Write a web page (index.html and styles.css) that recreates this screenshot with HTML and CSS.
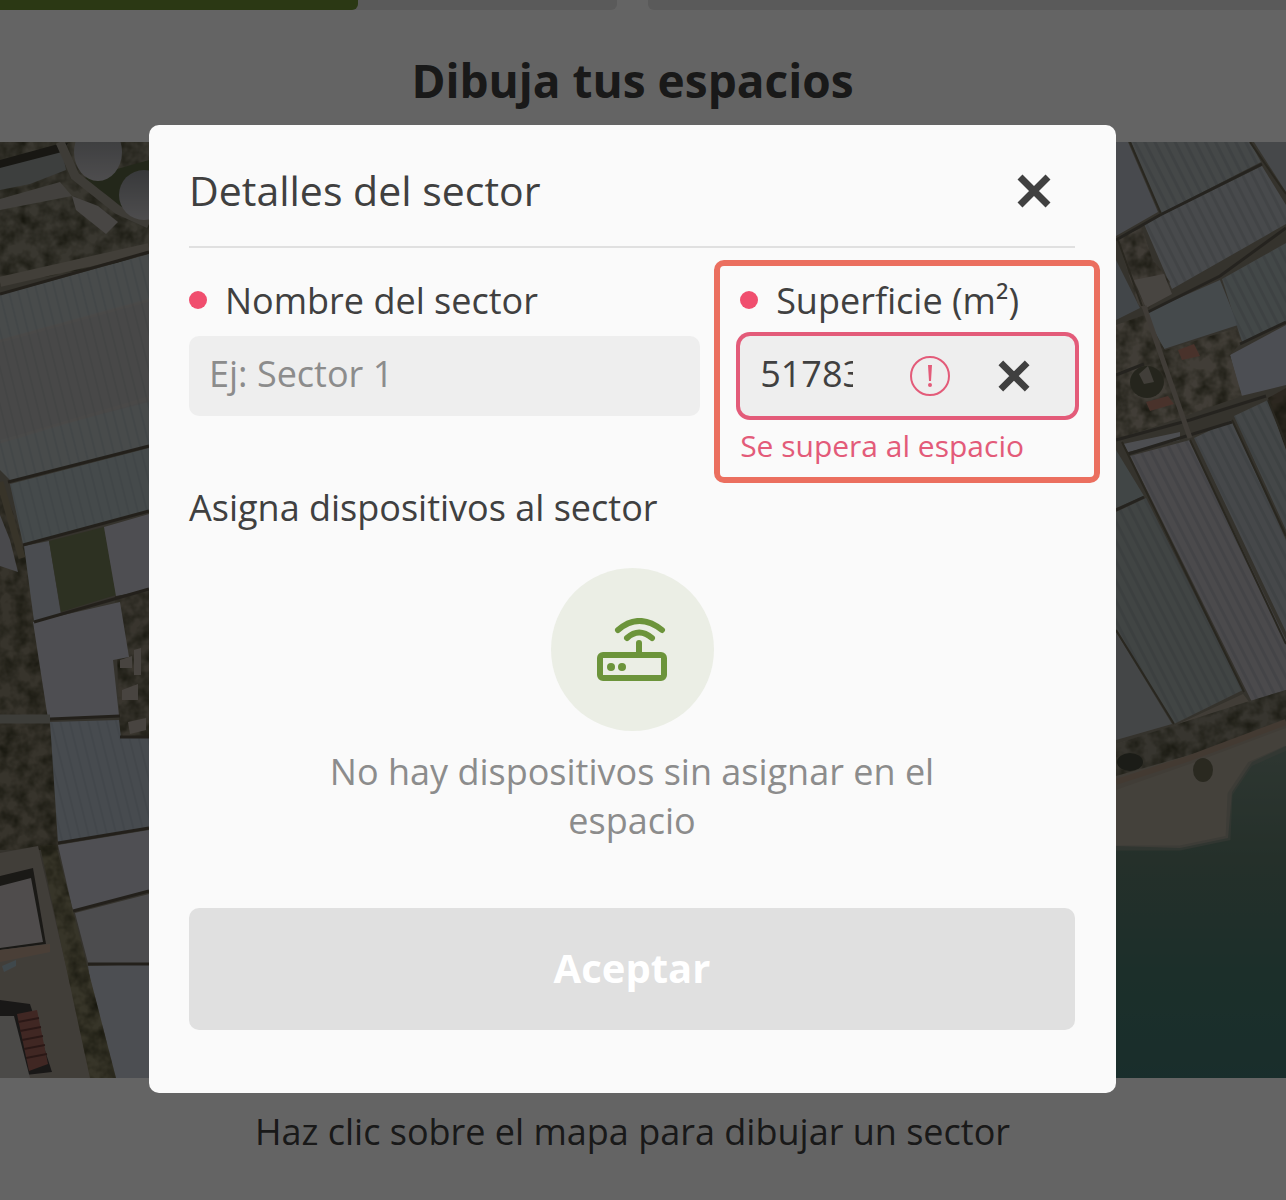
FILE: index.html
```
<!DOCTYPE html>
<html lang="es">
<head>
    <meta charset="UTF-8">
    <meta name="viewport" content="width=device-width, initial-scale=1.0">
    <title>Dibuja tus espacios</title>
    <link rel="stylesheet" href="styles.css">
</head>
<body>

    <!-- Página -->
    <div class="page">
        <div class="progress">
            <div class="step current"><div class="step-fill"></div></div>
            <div class="step"></div>
        </div>

        <h1>Dibuja tus espacios</h1>

        <!-- Mapa -->
        <svg class="map" viewBox="0 142 1286 936" preserveAspectRatio="xMidYMid slice" aria-hidden="true">
            <defs>
                <pattern id="rows" width="9" height="9" patternUnits="userSpaceOnUse" patternTransform="rotate(-14)">
                    <rect width="2" height="9" fill="#6f7f82" opacity="0.15"/>
                </pattern>
                <pattern id="rowsRight" width="9" height="9" patternUnits="userSpaceOnUse" patternTransform="rotate(-27)">
                    <rect width="3" height="9" fill="#5c6b6e" opacity="0.18"/>
                </pattern>
                <linearGradient id="sea" x1="0" y1="0" x2="0" y2="1">
                    <stop offset="0" stop-color="#73897c"/>
                    <stop offset="0.35" stop-color="#5c7869"/>
                    <stop offset="0.7" stop-color="#467669"/>
                    <stop offset="1" stop-color="#40736e"/>
                </linearGradient>
                <linearGradient id="tank" x1="0" y1="0" x2="0" y2="1">
                    <stop offset="0" stop-color="#8c8f93"/>
                    <stop offset="1" stop-color="#c2c0c3"/>
                </linearGradient>
                <filter id="grain" x="0" y="0" width="100%" height="100%" color-interpolation-filters="sRGB">
                    <feTurbulence type="fractalNoise" baseFrequency="0.07" numOctaves="3" seed="4"/>
                    <feColorMatrix values="0 0 0 0 0.2  0 0 0 0 0.2  0 0 0 0 0.12  1.6 0 0 0 -0.55"/>
                    <feComposite in2="SourceGraphic" operator="in" result="n"/>
                    <feMerge><feMergeNode in="SourceGraphic"/><feMergeNode in="n"/></feMerge>
                </filter>
            </defs>

            <!-- Zona oeste -->
            <rect y="142" width="640" height="936" fill="#857f70"/>
            <g filter="url(#grain)">
                <path d="M0 142H149V258L0 285Z" fill="#8f8a78"/>
                <path d="M0 480L24 540L52 740L58 850L0 850Z" fill="#8a826e"/>
                <path d="M115 596L149 586V745H120Z" fill="#8e8674"/>
            </g>
            <path d="M0 164L62 150L66 170L30 184L0 190Z" fill="#989d9c"/>
            <path d="M0 160L62 143H68L62 152L0 168Z" fill="#3c3b30"/>
            <path d="M0 199L60 182L72 196L0 210Z" fill="#a8a49b"/>
            <path d="M85 178L149 160V215L128 212Z" fill="#596342"/>
            <path d="M60 142L75 176L118 210L149 224" fill="none" stroke="#9c978b" stroke-width="9"/>
            <path d="M72 196L98 206L118 222L106 234L76 210Z" fill="#b3aeaa"/>
            <ellipse cx="98" cy="152" rx="24" ry="29" fill="url(#tank)"/>
            <ellipse cx="144" cy="195" rx="25" ry="25" fill="url(#tank)"/>
            <path d="M0 282L149 248" stroke="#a59d8e" stroke-width="10"/>
            <path d="M0 295L149 254V446L12 482L0 470Z" fill="#b3bbbc"/>
            <path d="M0 340L149 300V402L0 440Z" fill="#b5b5b4"/>
            <path d="M0 341L149 300M0 442L149 398" stroke="#c0b9b4" stroke-width="3" opacity="0.5"/>
            <path d="M10 484L149 448V511L23 544Z" fill="#adb9bb"/>
            <path d="M24 546L49 541L61 615L34 621Z" fill="#b8bfc8"/>
            <path d="M49 541L104 527L116 595L61 612Z" fill="#727a55"/>
            <path d="M104 527L149 514V590L116 596Z" fill="#c3c4ce"/>
            <path d="M33 622L120 602L129 657L113 660L119 716L48 719Z" fill="#c4c4cd"/>
            <path d="M50 722L119 720L121 738H149V828L58 842Z" fill="#b1bbc6"/>
            <path d="M58 845L149 830V890L73 911Z" fill="#c5c6d0"/>
            <path d="M75 913L149 894V963L88 963Z" fill="#bebec3"/>
            <path d="M88 966L149 964V1078H114L98 1030Z" fill="#bfc3ce"/>
            <path d="M0 295L149 254V446L12 482L0 470ZM10 484L149 448V511L23 544ZM50 722L119 720L121 738H149V828L58 842Z" fill="url(#rows)"/>
            <path d="M0 294L149 252M8 482L149 446M23 545L149 511M34 622L149 589M50 719L120 716M120 737H149M58 843L149 828M73 911L149 891M88 964H149" fill="none" stroke="#585245" stroke-width="3"/>
            <path d="M0 719L50 719" stroke="#9a9890" stroke-width="9"/>
            <path d="M0 482L22 558" stroke="#8c8268" stroke-width="7"/>
            <path d="M0 515L10 540L18 572L0 566Z" fill="#b6b6bd"/>
            <path d="M120 660L132 656V668H120ZM134 650L141 648V675H134ZM122 690L138 684V700H122ZM128 722L146 718V730L130 734Z" fill="#b5aaa0"/>
            <path d="M0 853L38 846L92 1078H0Z" fill="#a49b90"/>
            <path d="M0 876L33 868L46 944L0 950Z" fill="#423f38"/>
            <path d="M0 886L31 878L43 942L0 948Z" fill="#c5bfbd"/>
            <path d="M0 950L50 944V952L0 962Z" fill="#b99e89"/>
            <path d="M40 846L56 845L116 1078H90Z" fill="#8b8566" filter="url(#grain)"/>
            <path d="M0 1000L30 1004L52 1072L0 1078Z" fill="#3f3c3a"/>
            <path d="M0 1016L14 1016L30 1078H0Z" fill="#bcb8b5"/>
            <path d="M17 1014L37 1010L48 1064L29 1071Z" fill="#a06258"/>
            <path d="M18 1022L39 1018M20 1031L41 1027M22 1040L43 1036M24 1049L45 1045M26 1058L47 1054" stroke="#6a3d38" stroke-width="2"/>
            <path d="M2 966L16 960V966L4 972Z" fill="#9fb4be"/>

            <!-- Zona este -->
            <rect x="640" y="142" width="646" height="936" fill="#857f70"/>
            <path d="M1116 142H1128L1158 212L1116 236Z" fill="#b5b9c2"/>
            <path d="M1131 142H1250L1261 162L1160 214Z" fill="#acb3b5"/>
            <path d="M1144 224L1262 166L1286 205V224L1172 289Z" fill="#b4babe"/>
            <path d="M1254 142H1286V192Z" fill="#aeb4b9"/>
            <path d="M1222 279L1286 243V322L1242 342Z" fill="#a9b3b4"/>
            <path d="M1145 313L1220 280L1238 325L1164 349Z" fill="#adb8bf"/>
            <path d="M1230 355L1286 325V385L1241 396Z" fill="#bfc2cf"/>
            <path d="M1116 260L1140 308L1116 320Z" fill="#a5b0b7"/>
            <g filter="url(#grain)">
                <path d="M1117 238L1142 228L1152 258L1170 282L1146 312L1138 304Z" fill="#a19788"/>
                <path d="M1116 325L1144 315L1165 350L1236 328L1242 342L1230 355L1242 396L1116 440Z" fill="#a39a89"/>
                <path d="M1268 398L1286 388V450Z" fill="#6e6350"/>
            </g>
            <path d="M1134 280L1164 274L1172 294L1146 308Z" fill="#b5aca4"/>
            <ellipse cx="1147" cy="382" rx="17" ry="16" fill="#5d5e4a"/>
            <path d="M1139 374L1148 366L1154 382L1144 384Z" fill="#a29c8e"/>
            <path d="M1178 350L1194 344L1200 356L1182 360ZM1146 402L1168 396L1174 404L1150 411Z" fill="#b77d6d"/>
            <path d="M1123 444L1180 432V440L1128 452Z" fill="#c0c3cb"/>
            <path d="M1116 450L1144 496L1116 508Z" fill="#a3b0b0"/>
            <path d="M1116 512L1146 498L1243 690L1174 724L1116 630Z" fill="#a4acab"/>
            <path d="M1130 456L1190 440L1286 640V690L1254 706Z" fill="#bbb9bf"/>
            <path d="M1194 438L1232 420L1286 540V632Z" fill="#afb5b9"/>
            <path d="M1234 416L1268 400L1286 450V530Z" fill="#aab2b3"/>
            <path d="M1116 632L1172 724L1116 740Z" fill="#abb0b2"/>
            <path d="M1131 142H1250L1261 162L1160 214ZM1144 224L1262 166L1286 205V224L1172 289ZM1222 279L1286 243V322L1242 342ZM1116 512L1146 498L1243 690L1174 724L1116 630ZM1130 456L1190 440L1286 640V690L1254 706ZM1194 438L1232 420L1286 540V632ZM1234 416L1268 400L1286 450V530Z" fill="url(#rowsRight)"/>
            <path d="M1116 240L1160 215L1262 164M1146 313L1220 276L1286 228M1116 375L1144 364M1116 440L1190 420L1266 396M1128 454L1232 422M1240 344L1286 322M1116 510L1144 497" fill="none" stroke="#5c594e" stroke-width="3"/>
            <path d="M1130 142L1161 214M1250 142L1286 194M1118 240L1142 306M1122 442L1244 692M1190 440L1286 644M1232 420L1286 536M1116 630L1174 724M1268 400L1286 444" fill="none" stroke="#676250" stroke-width="2"/>
            <path d="M1144 306L1190 438" fill="none" stroke="#a0978a" stroke-width="5"/>

            <!-- Costa -->
            <path d="M640 760L1116 744L1174 726L1243 694L1254 708L1286 690V1078H640Z" fill="#a39a8a"/>
            <g filter="url(#grain)">
                <path d="M1116 744L1240 704L1286 690V724L1200 752L1116 776Z" fill="#8a8575"/>
            </g>
            <path d="M1116 790L1190 764L1286 728V760L1230 850H1116Z" fill="#aba394"/>
            <path d="M1116 782L1190 758L1286 722" fill="none" stroke="#a8917e" stroke-width="6"/>
            <ellipse cx="1130" cy="762" rx="13" ry="9" fill="#45483a"/>
            <ellipse cx="1203" cy="770" rx="10" ry="12" fill="#696752"/>
            <path d="M640 846H1116L1180 848L1228 838L1232 792L1252 762L1286 746V1078H640Z" fill="url(#sea)"/>
            <path d="M1116 848L1180 848L1228 838L1230 794L1250 764L1286 748" fill="none" stroke="#8c8f83" stroke-width="5" opacity="0.6"/>
        </svg>

        <p class="hint">Haz clic sobre el mapa para dibujar un sector</p>
    </div>

    <!-- Modal con los detalles del sector -->
    <div class="overlay">
        <form class="modal" role="dialog" aria-labelledby="modalTitle">
            <div class="modal-header">
                <h2 id="modalTitle">Detalles del sector</h2>
                <button type="button" class="close" aria-label="Cerrar">
                    <svg class="icon-x" viewBox="0 0 34 34"><path d="M3 3L31 31M31 3L3 31"/></svg>
                </button>
            </div>

            <div class="fields">
                <div class="field">
                    <label for="nombre">Nombre del sector</label>
                    <div class="control">
                        <input type="text" id="nombre" placeholder="Ej: Sector 1">
                    </div>
                </div>
                <div class="field highlight">
                    <label for="superficie">Superficie (m²)</label>
                    <div class="control invalid">
                        <input type="text" id="superficie" value="51783" aria-describedby="superficieError">
                        <svg class="icon-alert" viewBox="0 0 40 40" aria-hidden="true">
                            <circle cx="20" cy="20" r="19"/>
                            <path d="M18 9H22L21 25H19Z"/>
                            <circle class="point" cx="20" cy="29" r="2"/>
                        </svg>
                        <button type="button" class="clear" aria-label="Borrar">
                            <svg class="icon-x" viewBox="0 0 34 34"><path d="M3 3L31 31M31 3L3 31"/></svg>
                        </button>
                    </div>
                    <p class="error" id="superficieError">Se supera al espacio</p>
                </div>
            </div>

            <h3>Asigna dispositivos al sector</h3>

            <div class="empty">
                <div class="empty-icon">
                    <svg viewBox="0 0 70 64" aria-hidden="true">
                        <rect x="3" y="37" width="64" height="23" rx="3"/>
                        <path d="M42 25V37M21 12Q42 -6 65 12M30 20Q42 9 55 20"/>
                        <circle cx="14" cy="49" r="4"/>
                        <circle cx="25" cy="49" r="4"/>
                    </svg>
                </div>
                <p>No hay dispositivos sin asignar en el espacio</p>
            </div>

            <button type="submit" class="accept" disabled>Aceptar</button>
        </form>
    </div>

</body>
</html>
```
FILE: styles.css
```
* {
    box-sizing: border-box;
}

body {
    margin: 0;
    background-color: #fafafa;
    color: #404040;
    font-family: "Open Sans", "Noto Sans", sans-serif;
    font-size: 36px;
    line-height: 49px;
}

h1, h2, h3, p {
    margin: 0;
}

button, input {
    font: inherit;
    color: inherit;
    border: none;
    background: none;
    padding: 0;
}

/* Página */
.page {
    min-height: 100vh;
    overflow: hidden;
}

.progress {
    display: flex;
    gap: 31px;
}

.step {
    flex: 1;
    height: 10px;
    background-color: #e0e0e0;
    border-radius: 0 0 0 6px;
}

.step.current {
    flex: none;
    width: 48%;
    border-radius: 0 0 6px 0;
}

.step-fill {
    width: 58%;
    height: 100%;
    background-color: #6b8c32;
    border-radius: 0 0 6px 0;
}

h1 {
    padding: 40px 21px 32px 0;
    text-align: center;
    font-size: 46px;
    line-height: 60px;
    font-weight: 700;
}

.map {
    display: block;
    width: 100%;
    height: 78vh;
}

.hint {
    padding: 29px 21px 30px 0;
    text-align: center;
}

/* Modal */
.overlay {
    position: fixed;
    inset: 0;
    display: flex;
    justify-content: center;
    align-items: center;
    padding: 18px 170px 0 149px;
    background-color: rgba(0, 0, 0, 0.6);
}

.modal {
    width: 100%;
    max-width: 1100px;
    padding: 0 41px 63px 40px;
    background-color: #fafafa;
    border-radius: 10px;
}

.modal-header {
    display: flex;
    justify-content: space-between;
    align-items: center;
    height: 123px;
    padding: 10px 24px 0 0;
    border-bottom: 2px solid #e0e0e0;
}

h2 {
    font-size: 41px;
    font-weight: 500;
}

.close, .clear {
    display: flex;
    cursor: pointer;
}

.icon-x {
    width: 34px;
    height: 34px;
    fill: none;
    stroke: #404040;
    stroke-width: 7;
}

.fields {
    display: grid;
    grid-template-columns: 29fr 19fr;
    gap: 40px;
    padding-top: 28px;
}

.field {
    position: relative;
    min-width: 0;
}

label {
    display: flex;
    align-items: center;
    gap: 18px;
    height: 48px;
    margin-bottom: 12px;
    white-space: nowrap;
}

/* Campo obligatorio */
label::before {
    content: "";
    width: 18px;
    height: 18px;
    border-radius: 50%;
    background-color: #f04e6e;
}

.control {
    display: flex;
    align-items: center;
    height: 80px;
    padding: 0 20px;
    background-color: #eee;
    border-radius: 10px;
}

.control input {
    flex: 1;
    min-width: 0;
    padding-bottom: 6px;
    outline: none;
}

.control input::placeholder {
    color: #8c8c8c;
    opacity: 1;
}

.control.invalid {
    padding-right: 45px;
    box-shadow: 0 0 0 4px #e35b79;
}

.control.invalid input {
    flex: none;
    width: 93px;
    margin-right: 57px;
}

.icon-alert {
    width: 40px;
    height: 40px;
    margin-right: auto;
    fill: none;
    stroke: #e35b79;
    stroke-width: 2;
}

.icon-alert path, .icon-alert .point {
    fill: #e35b79;
    stroke: none;
}

.clear .icon-x {
    width: 32px;
    height: 32px;
}

.error {
    margin-top: 8px;
    font-size: 30px;
    line-height: 44px;
    color: #e35b79;
}

/* Recuadro que resalta el campo */
.highlight::after {
    content: "";
    position: absolute;
    inset: -16px -25px -15px -26px;
    border: 6px solid #eb6f5f;
    border-radius: 10px;
    pointer-events: none;
}

h3 {
    margin-top: 15px;
    font-size: 36px;
    font-weight: 400;
}

.empty {
    display: flex;
    flex-direction: column;
    align-items: center;
    gap: 16px;
    padding: 36px 120px 63px;
    text-align: center;
    color: #8c8c8c;
}

.empty-icon {
    display: grid;
    place-items: center;
    width: 163px;
    height: 163px;
    border-radius: 50%;
    background-color: #ebeee5;
}

.empty-icon svg {
    width: 70px;
    height: 64px;
    fill: none;
    stroke: #6c943b;
    stroke-width: 6;
    stroke-linecap: round;
}

.empty-icon circle {
    fill: #6c943b;
    stroke: none;
}

.accept {
    width: 100%;
    height: 122px;
    padding-bottom: 4px;
    background-color: #e0e0e0;
    border-radius: 10px;
    font-size: 40px;
    font-weight: 700;
    color: #fff;
}
```
